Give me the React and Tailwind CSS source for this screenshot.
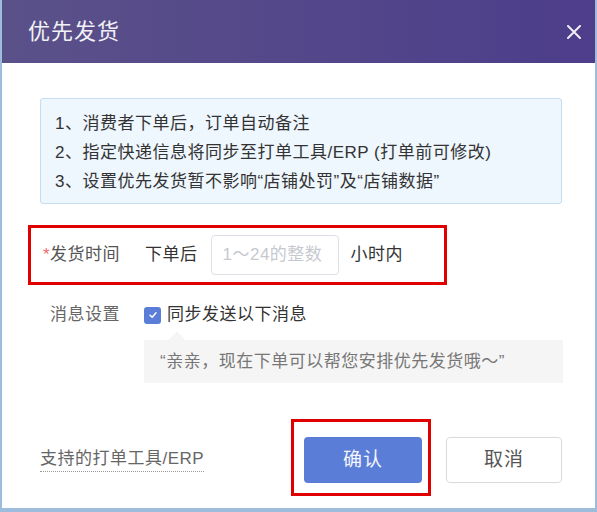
import React, { useState } from 'react';

const PriorityShipDialog = () => {
  const [hours, setHours] = useState('');
  const [syncMsg, setSyncMsg] = useState(true);

  return (
    <div className="w-[597px] h-[512px] bg-white flex flex-col border-x-2 border-b-4 border-[#9ebcdb] tracking-[0.5px] font-['Liberation_Sans','Noto_Sans_CJK_SC',sans-serif]">
      {/* Header */}
      <div className="h-[63px] shrink-0 bg-gradient-to-r from-[#5b5189] to-[#4d3d8b] flex items-center justify-between pl-[26px] pr-[14px]">
        <h1 className="text-[22px] text-[#f2f1f7] tracking-[1px]">优先发货</h1>
        <button className="w-[14px] h-[14px] flex items-center justify-center">
          <svg width="14" height="14" viewBox="0 0 14 14">
            <path d="M1 1L13 13M13 1L1 13" stroke="#eeeef5" strokeWidth="2" strokeLinecap="round" />
          </svg>
        </button>
      </div>

      <div className="flex flex-col pl-[38px] pr-[33px]">
        {/* Notice */}
        <div className="mt-[35px] h-[106px] border border-[#c6dcf1] bg-[#eef6fe] rounded-[3px] pl-[14px] pt-[10px] text-[17px] leading-[29px] text-[#333]">
          <p>1、消费者下单后，订单自动备注</p>
          <p>2、指定快递信息将同步至打单工具/ERP (打单前可修改)</p>
          <p>3、设置优先发货暂不影响“店铺处罚”及“店铺数据”</p>
        </div>

        {/* Ship time */}
        <div className="mt-[21px] -ml-[12px] w-[419px] h-[60px] border-[3px] border-[#e10000] flex items-center text-[17px]">
          <div className="w-[89px] text-right text-[#555] whitespace-nowrap">
            <span className="text-[#f56c6c]">*</span>发货时间
          </div>
          <span className="ml-[25px] text-[#333]">下单后</span>
          <input
            value={hours}
            onChange={(e) => setHours(e.target.value)}
            placeholder="1～24的整数"
            className="ml-[13px] w-[128px] h-[40px] border border-[#dcdfe6] rounded-[4px] pl-[11px] text-[17px] text-[#333] placeholder:text-[#c6c9d0] outline-none"
          />
          <span className="ml-[12px] text-[#333]">小时内</span>
        </div>

        {/* Message setting */}
        <div className="mt-[14px] h-[32px] flex items-center text-[17px]">
          <div className="w-[80px] text-right text-[#666] whitespace-nowrap">消息设置</div>
          <button
            onClick={() => setSyncMsg(!syncMsg)}
            className="ml-[24px] w-[17px] h-[17px] rounded-[3px] bg-[#5a7ed8] flex items-center justify-center"
          >
            {syncMsg && (
              <svg width="10" height="10" viewBox="0 0 10 10">
                <path d="M2 5.2L4.2 7.3L8 2.8" fill="none" stroke="#fff" strokeWidth="1.5" strokeLinecap="round" strokeLinejoin="round" />
              </svg>
            )}
          </button>
          <span className="ml-[6px] text-[#333]">同步发送以下消息</span>
        </div>

        <div className="relative mt-[9px] ml-[104px] w-[419px] h-[43px] bg-[#f5f5f5] flex items-center pl-[16px] text-[17px] text-[#777]">
          <div className="absolute left-[27px] -top-[6px] w-[12px] h-[12px] bg-[#f5f5f5] rotate-45" />
          <span className="relative">“亲亲，现在下单可以帮您安排优先发货哦～”</span>
        </div>

        {/* Footer */}
        <div className="mt-[36px] flex items-start">
          <a className="mt-[29px] text-[17px] leading-[22px] text-[#666] border-b border-dotted border-[#999] pb-[1px] cursor-pointer">
            支持的打单工具/ERP
          </a>
          <div className="flex-1" />
          <div className="border-[3px] border-[#e10000] pl-[10px] pr-[6px] pt-[15px] pb-[10px]">
            <button className="w-[118px] h-[46px] bg-[#5a7ed8] rounded-[4px] text-[#f4f6fc] text-[19px] tracking-[1px]">确认</button>
          </div>
          <button className="ml-[15px] mt-[18px] w-[116px] h-[46px] border border-[#d9d9d9] rounded-[4px] bg-white text-[#555] text-[19px] tracking-[1px]">
            取消
          </button>
        </div>
      </div>
    </div>
  );
};

export default function App() {
  return <PriorityShipDialog />;
}
